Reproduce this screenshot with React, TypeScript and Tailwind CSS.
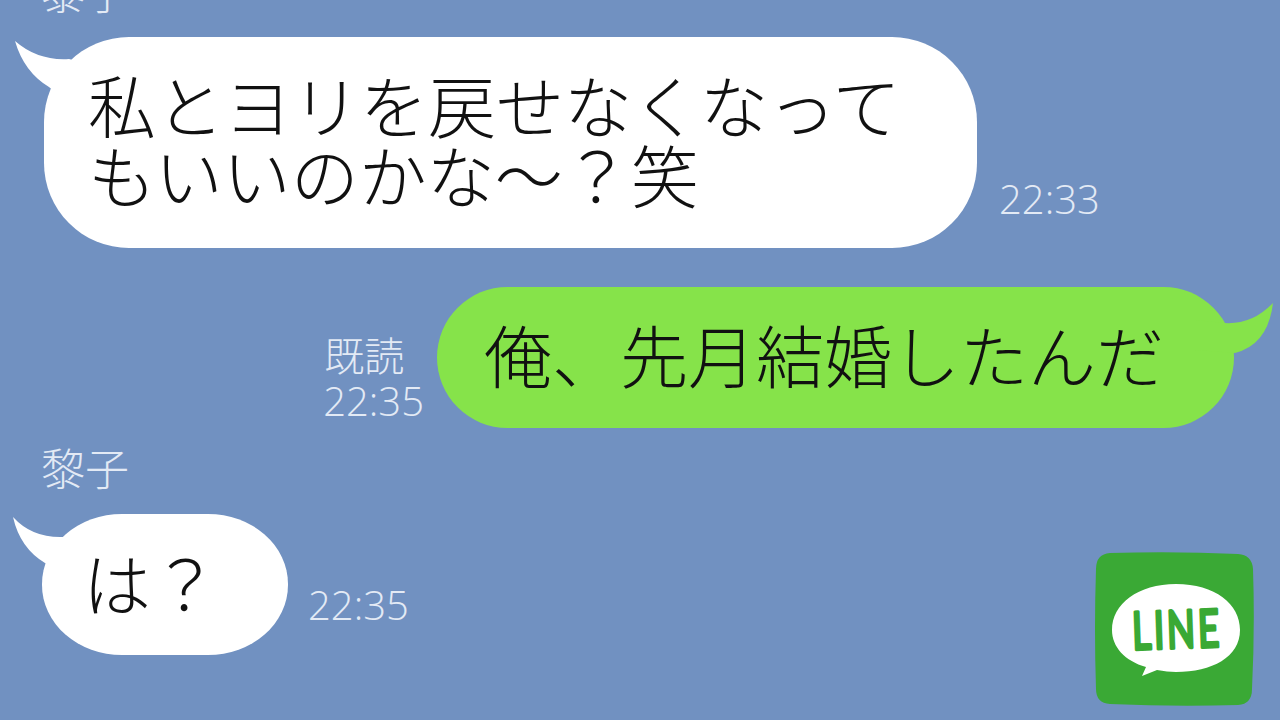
const jp = "font-['Noto_Sans_CJK_JP',sans-serif]";

const Name = ({ className }: { className: string }) => (
  <div className={`${jp} ml-[41px] h-[44px] text-[44px] leading-[44px] font-light text-[#e3eaf5] ${className}`}>黎子</div>
);

const Time = ({ text, className }: { text: string; className: string }) => (
  <div className={`font-['Open_Sans',sans-serif] text-[40px] leading-[40px] font-light text-[#e3eaf5] ${className}`}>{text}</div>
);

const LineLogo = () => (
  <svg viewBox="1095 553 159 154" className="ml-auto mr-[26px] mt-[38px] h-[154px] w-[159px] shrink-0">
    <path d="M1110 554 Q1175 552 1238 555 Q1252 556 1253 570 Q1255 630 1252 690 Q1252 705 1238 706 Q1175 708 1110 705 Q1096 704 1096 690 Q1094 630 1096 570 Q1096 555 1110 554 Z" fill="#3aa935" />
    <path d="M1176 585 C1215 585 1240 605 1240 631 C1240 658 1212 673 1176 673 C1170 673 1164 672 1157 671 L1142 677 L1146 668 C1125 662 1112 648 1112 631 C1112 605 1138 585 1176 585 Z" fill="#ffffff" />
    <text x="1177" y="649" textAnchor="middle" transform="rotate(-2 1177 631)" fontFamily="Lato, sans-serif" fontWeight="400" fontSize="52" letterSpacing="4" fill="#3aa935" stroke="#3aa935" strokeWidth="3.5" strokeLinejoin="round" textLength="90" lengthAdjust="spacingAndGlyphs">LINE</text>
  </svg>
);

export default function App() {
  return (
    <div className="h-[720px] w-[1280px] overflow-hidden bg-[#7191c1]">
      <Name className="-mt-[31px] mb-[24px]" />

      <div className="flex items-end pl-[44px]">
        <div className={`${jp} relative h-[211px] w-[933px] rounded-[85px] bg-white pl-[44px] pt-[32px] text-[68px] leading-[70px] font-light text-[#111]`}>
          <svg viewBox="12 37 100 70" className="absolute -left-[32px] top-0 h-[70px] w-[100px]">
            <path d="M15 41 Q38 61 69 59 L110 70 L70 105 L49 87 Q24 72 15 41 Z" fill="#ffffff" />
          </svg>
          <div className="relative">私とヨリを戻せなくなって</div>
          <div className="relative">もいいのかな～？笑</div>
        </div>
        <Time text="22:33" className="mb-[29px] ml-[22px]" />
      </div>

      <div className="mt-[39px] flex items-end justify-end pr-[46px]">
        <div className="mr-[13px] mb-[7px]">
          <div className={`${jp} ml-[1px] text-[40px] leading-[54px] font-light text-[#e3eaf5]`}>既読</div>
          <Time text="22:35" className="" />
        </div>
        <div className={`${jp} relative flex h-[141px] w-[797px] items-center rounded-full bg-[#86e34a] pb-[8px] pl-[47px] text-[68px] font-light text-[#111]`}>
          <svg viewBox="1190 300 85 60" className="absolute -right-[41px] top-[13px] h-[60px] w-[85px]">
            <path d="M1273 303 Q1252 325 1224 323 L1195 320 L1195 350 L1235 353 Q1268 345 1273 303 Z" fill="#86e34a" />
          </svg>
          <span className="relative leading-none">俺、先月結婚したんだ</span>
        </div>
      </div>

      <Name className="mt-[17px] mb-[25px]" />

      <div className="flex items-start pl-[42px]">
        <div className={`${jp} relative flex h-[141px] w-[246px] items-center rounded-[80px/70px] bg-white pb-[6px] pl-[41px] text-[68px] font-light text-[#111]`}>
          <svg viewBox="10 514 90 60" className="absolute -left-[32px] top-0 h-[60px] w-[90px]">
            <path d="M13 517 Q32 538 63 537 L98 540 L60 572 L45 563 Q20 548 13 517 Z" fill="#ffffff" />
          </svg>
          <span className="relative leading-none">は？</span>
        </div>
        <Time text="22:35" className="ml-[20px] mt-[71px]" />
        <LineLogo />
      </div>
    </div>
  );
}
